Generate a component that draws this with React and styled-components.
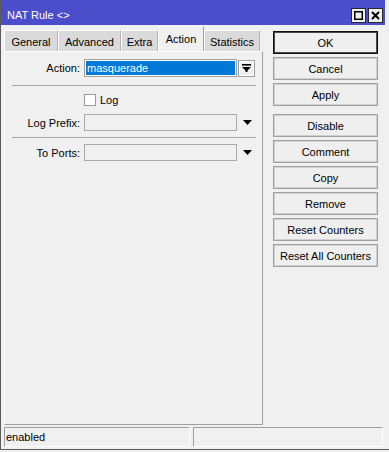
import React from "react";
import styled, { createGlobalStyle } from "styled-components";

const Global = createGlobalStyle`
  html, body { margin: 0; padding: 0; background: #f0f0f0; }
  body { font-family: "Liberation Sans", Arial, sans-serif; font-size: 11px; color: #000; }
  #root { width: 389px; height: 452px; }
  * { box-sizing: border-box; }
`;

const Window = styled.div`
  width: 389px;
  height: 450px;
  border-left: 1px solid #5c5c5c;
  border-bottom: 1px solid #5c5c5c;
  background: #f0f0f0;
  display: flex;
  flex-direction: column;
`;

const TitleBar = styled.div`
  height: 25px;
  margin-right: 4px;
  background: #4b4dca;
  display: flex;
  align-items: center;
  justify-content: space-between;
  padding: 5px 2px 0 6px;
  color: #fff;
  font-size: 11px;
`;

const TitleButtons = styled.div`
  display: flex;
  gap: 2px;
`;

const TitleButton = styled.div`
  width: 15px;
  height: 15px;
  background: #eeeeee;
  border: 1px solid #2a2a2a;
  display: flex;
  align-items: center;
  justify-content: center;
`;

const Body = styled.div`
  height: 400px;
  display: flex;
  padding: 1px 0 0 3px;
`;

const LeftColumn = styled.div`
  width: 259px;
  display: flex;
  flex-direction: column;
`;

const TabRow = styled.div`
  height: 25px;
  display: flex;
  align-items: flex-end;
`;

const Tab = styled.div`
  width: ${(p) => p.$w}px;
  height: ${(p) => (p.$active ? 25 : 21)}px;
  background: ${(p) => (p.$active ? "#f0f0f0" : "#dadada")};
  border-top: 1px solid #ffffff;
  border-left: 1px solid #ffffff;
  border-right: 1px solid ${(p) => (p.$active ? "#a0a0a0" : "#b4b4b4")};
  display: flex;
  justify-content: center;
  align-items: center;
  padding-top: ${(p) => (p.$active ? 0 : 2)}px;
  white-space: nowrap;
`;

const Panel = styled.div`
  flex: 1;
  border-top: 1px solid #ffffff;
  border-left: 1px solid #ffffff;
  border-right: 1px solid #a0a0a0;
  border-bottom: 1px solid #a0a0a0;
  padding: 7px 6px 0 7px;
  display: flex;
  flex-direction: column;
`;

const FieldRow = styled.div`
  display: flex;
  align-items: center;
  margin-top: ${(p) => p.$mt || 0}px;
`;

const Label = styled.div`
  width: 68px;
  margin-right: 4px;
  text-align: right;
  white-space: nowrap;
`;

const SelectBox = styled.div`
  width: 153px;
  height: 18px;
  border: 1px solid #a0a0a0;
  box-shadow: inset 0 0 0 1px #ffffff;
  background: #0078d7;
  color: #fff;
  display: flex;
  align-items: center;
  padding-left: 2px;
`;

const DropButton = styled.div`
  width: 17px;
  height: 17px;
  margin-left: 1px;
  border: 1px solid #a0a0a0;
  box-shadow: inset 0 0 0 1px #ffffff;
  background: #f0f0f0;
  display: flex;
  align-items: center;
  justify-content: center;
`;

const TextBox = styled.div`
  width: 153px;
  height: 17px;
  border: 1px solid #a9a9a9;
  background: #f0f0f0;
`;

const ArrowSlot = styled.div`
  width: 18px;
  height: 17px;
  display: flex;
  align-items: center;
  justify-content: center;
  padding-left: 3px;
`;

const Separator = styled.div`
  height: 1px;
  background: #a8a8a8;
  margin-top: ${(p) => p.$mt}px;
`;

const CheckRow = styled.div`
  display: flex;
  align-items: center;
  padding-left: 72px;
  margin-top: 8px;
  height: 12px;
`;

const CheckBox = styled.div`
  width: 12px;
  height: 12px;
  border: 1px solid #999999;
  background: #ffffff;
  margin-right: 4px;
`;

const RightColumn = styled.div`
  width: 105px;
  margin-left: 10px;
  padding-top: 5px;
  display: flex;
  flex-direction: column;
  gap: 3px;
`;

const Button = styled.div`
  height: 23px;
  border: 1px solid ${(p) => (p.$default ? "#111111" : "#a0a0a0")};
  box-shadow: inset 0 0 0 1px ${(p) => (p.$default ? "#4a4a4a" : "#d0d0d0")};
  background: #efefef;
  display: flex;
  align-items: center;
  justify-content: center;
  white-space: nowrap;
  margin-top: ${(p) => p.$mt || 0}px;
`;

const StatusBar = styled.div`
  height: 20px;
  margin-top: 2px;
  padding-left: 3px;
  display: flex;
  gap: 3px;
`;

const StatusCell = styled.div`
  width: ${(p) => p.$w}px;
  border-top: 1px solid #a0a0a0;
  border-left: 1px solid #a0a0a0;
  border-bottom: 1px solid #ffffff;
  border-right: 1px solid #ffffff;
  display: flex;
  align-items: center;
  padding-left: 1px;
`;

const DownArrow = () => (
  <svg width="9" height="5" viewBox="0 0 9 5">
    <polygon points="0,0 9,0 4.5,5" fill="#000" />
  </svg>
);

const BarArrow = () => (
  <svg width="9" height="8" viewBox="0 0 9 8">
    <rect x="0" y="0" width="9" height="1.6" fill="#000" />
    <polygon points="0,3 9,3 5.5,6.5 5.5,8 3.5,8 3.5,6.5" fill="#000" />
  </svg>
);

const tabs = [
  { label: "General", w: 54 },
  { label: "Advanced", w: 63 },
  { label: "Extra", w: 37 },
  { label: "Action", w: 46, active: true },
  { label: "Statistics", w: 56 },
];

const buttons = [
  { label: "OK", def: true },
  { label: "Cancel" },
  { label: "Apply" },
  { label: "Disable", mt: 5 },
  { label: "Comment" },
  { label: "Copy" },
  { label: "Remove" },
  { label: "Reset Counters" },
  { label: "Reset All Counters" },
];

export default function App() {
  return (
    <>
      <Global />
      <Window>
        <TitleBar>
          <span>NAT Rule &lt;&gt;</span>
          <TitleButtons>
            <TitleButton>
              <svg width="9" height="9" viewBox="0 0 9 9">
                <rect x="0.75" y="0.75" width="7.5" height="7.5" fill="none" stroke="#000" strokeWidth="1.5" />
              </svg>
            </TitleButton>
            <TitleButton>
              <svg width="9" height="9" viewBox="0 0 9 9">
                <path d="M1 1 L8 8 M8 1 L1 8" stroke="#000" strokeWidth="2" />
              </svg>
            </TitleButton>
          </TitleButtons>
        </TitleBar>
        <Body>
          <LeftColumn>
            <TabRow>
              {tabs.map((t) => (
                <Tab key={t.label} $w={t.w} $active={t.active}>
                  {t.label}
                </Tab>
              ))}
            </TabRow>
            <Panel>
              <FieldRow>
                <Label>Action:</Label>
                <SelectBox>masquerade</SelectBox>
                <DropButton>
                  <BarArrow />
                </DropButton>
              </FieldRow>
              <Separator $mt={8} />
              <CheckRow>
                <CheckBox />
                <span>Log</span>
              </CheckRow>
              <FieldRow $mt={8}>
                <Label>Log Prefix:</Label>
                <TextBox />
                <ArrowSlot>
                  <DownArrow />
                </ArrowSlot>
              </FieldRow>
              <Separator $mt={6} />
              <FieldRow $mt={6}>
                <Label>To Ports:</Label>
                <TextBox />
                <ArrowSlot>
                  <DownArrow />
                </ArrowSlot>
              </FieldRow>
            </Panel>
          </LeftColumn>
          <RightColumn>
            {buttons.map((b) => (
              <Button key={b.label} $default={b.def} $mt={b.mt}>
                {b.label}
              </Button>
            ))}
          </RightColumn>
        </Body>
        <StatusBar>
          <StatusCell $w={186}>enabled</StatusCell>
          <StatusCell $w={190} />
        </StatusBar>
      </Window>
    </>
  );
}
